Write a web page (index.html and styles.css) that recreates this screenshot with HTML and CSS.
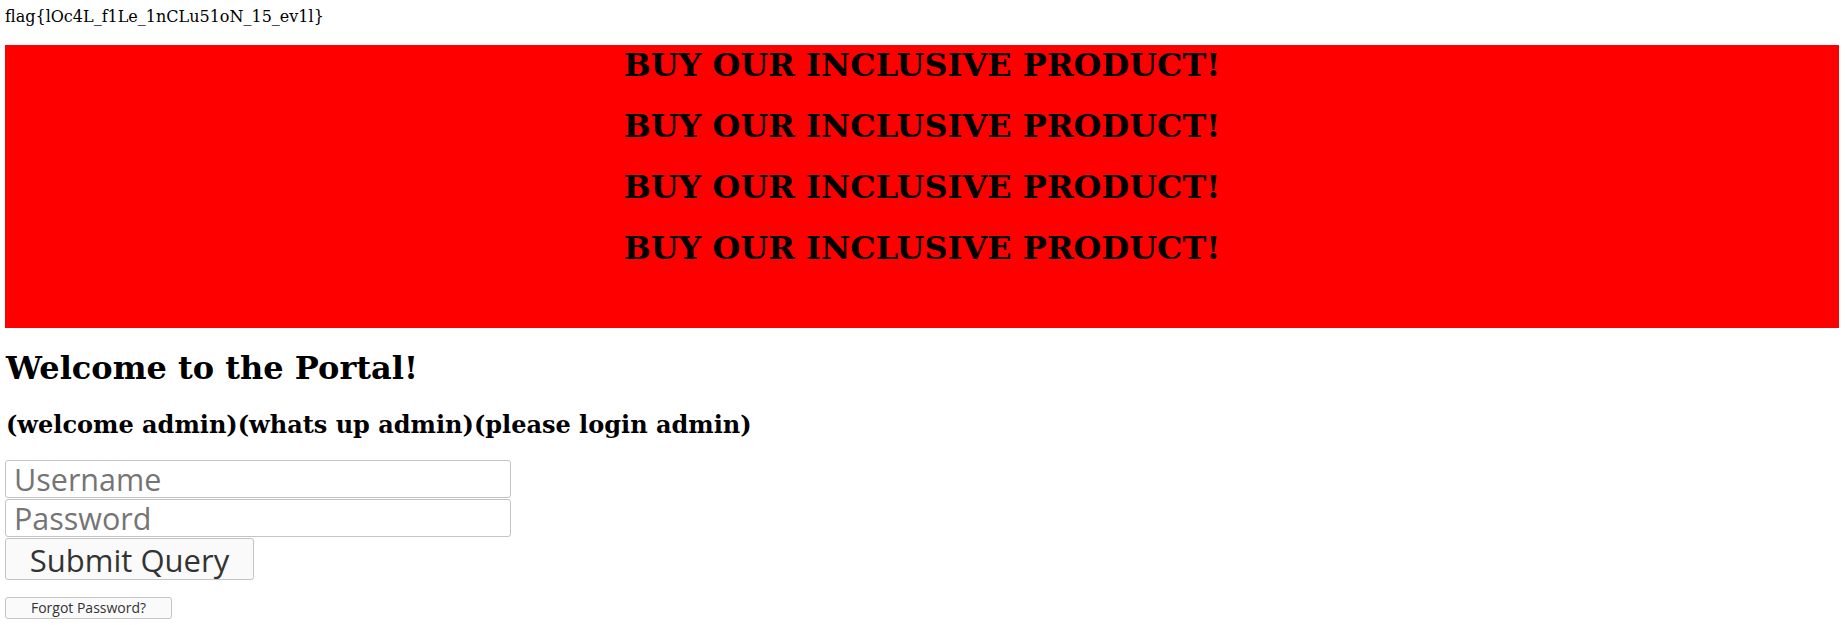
FILE: index.html
```html
<!DOCTYPE html>
<html>
<head>
<meta charset="utf-8">
<title>Portal</title>
<link rel="stylesheet" href="styles.css">
</head>
<body>
<div class="flag">flag{lOc4L_f1Le_1nCLu51oN_15_ev1l}</div>
<div class="banner">
  <h1 class="ad">BUY OUR INCLUSIVE PRODUCT!</h1>
  <h1 class="ad">BUY OUR INCLUSIVE PRODUCT!</h1>
  <h1 class="ad">BUY OUR INCLUSIVE PRODUCT!</h1>
  <h1 class="ad">BUY OUR INCLUSIVE PRODUCT!</h1>
</div>
<h1 class="welcome">Welcome to the Portal!</h1>
<h2 class="greet">(welcome admin)(whats up admin)(please login admin)</h2>
<form class="login" onsubmit="return false;">
  <input class="field" type="text" placeholder="Username">
  <input class="field" type="password" placeholder="Password">
  <button class="submit" type="submit">Submit Query</button>
  <button class="forgot" type="button">Forgot Password?</button>
</form>
</body>
</html>
```
FILE: styles.css
```css
html, body {
  background: #ffffff;
}
body {
  margin: 0;
  padding: 7px 6px 0 5px;
  font-family: "DejaVu Serif", serif;
  font-size: 16px;
  color: #000000;
}
.flag {
  line-height: 19px;
}
.banner {
  margin-top: 19px;
  background: #ff0000;
  padding: 2px 0 61px;
  text-align: center;
}
.ad {
  font-size: 32px;
  font-weight: bold;
  margin: 0 0 23.75px;
  line-height: 37.25px;
}
.ad:last-child {
  margin-bottom: 0;
}
.welcome {
  font-size: 32px;
  font-weight: bold;
  margin: 22px 0 0;
  line-height: 37.25px;
  padding-left: 1px;
}
.greet {
  font-size: 24px;
  font-weight: bold;
  margin: 23.75px 0 0;
  line-height: 28px;
  padding-left: 1px;
}
.login {
  margin-top: 20.3px;
  display: flex;
  flex-direction: column;
  align-items: flex-start;
  gap: 1.4px;
}
.field {
  box-sizing: border-box;
  width: 506px;
  height: 38px;
  margin: 0;
  padding: 0 8px;
  border: 1px solid #c4c4c4;
  border-radius: 3px;
  background: #ffffff;
  font-family: "Open Sans", sans-serif;
  font-size: 30.5px;
  color: #333333;
}
.field::placeholder {
  color: #757575;
}
.submit {
  box-sizing: border-box;
  width: 249px;
  height: 42px;
  margin: 0;
  padding: 0;
  border: 1px solid #c4c4c4;
  border-radius: 3px;
  background: #fafafa;
  font-family: "Open Sans", sans-serif;
  font-size: 31px;
  color: #333333;
}
.forgot {
  box-sizing: border-box;
  width: 167px;
  height: 22px;
  margin: 15.5px 0 0;
  padding: 0;
  border: 1px solid #c4c4c4;
  border-radius: 3px;
  background: #fafafa;
  font-family: "Open Sans", sans-serif;
  font-size: 14px;
  line-height: 18px;
  color: #333333;
}
```
